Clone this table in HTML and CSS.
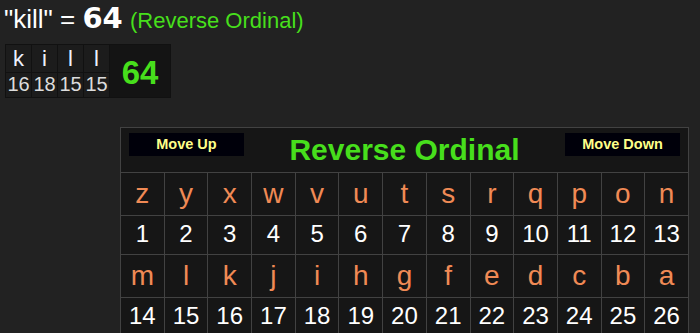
FILE: index.html
```html
<!DOCTYPE html>
<html lang="en">
<head>
<meta charset="utf-8">
<title>kill = 64 (Reverse Ordinal)</title>
<link rel="stylesheet" href="styles.css">
</head>
<body>
<div class="headline"><span class="word">"kill" = </span><b class="total">64</b> <span class="cipher">(Reverse Ordinal)</span></div>

<table class="breakdown">
  <tr>
    <td class="ch">k</td><td class="ch">i</td><td class="ch">l</td><td class="ch">l</td>
    <td class="sum" rowspan="2">64</td>
  </tr>
  <tr>
    <td class="val">16</td><td class="val">18</td><td class="val">15</td><td class="val">15</td>
  </tr>
</table>

<table class="cipher-table">
  <tr>
    <th colspan="13">
      <div class="bar">
        <button class="move">Move Up</button>
        <div class="title">Reverse Ordinal</div>
        <button class="move">Move Down</button>
      </div>
    </th>
  </tr>
  <tr class="letters">
    <td>z</td><td>y</td><td>x</td><td>w</td><td>v</td><td>u</td><td>t</td><td>s</td><td>r</td><td>q</td><td>p</td><td>o</td><td>n</td>
  </tr>
  <tr class="numbers">
    <td>1</td><td>2</td><td>3</td><td>4</td><td>5</td><td>6</td><td>7</td><td>8</td><td>9</td><td>10</td><td>11</td><td>12</td><td>13</td>
  </tr>
  <tr class="letters">
    <td>m</td><td>l</td><td>k</td><td>j</td><td>i</td><td>h</td><td>g</td><td>f</td><td>e</td><td>d</td><td>c</td><td>b</td><td>a</td>
  </tr>
  <tr class="numbers">
    <td>14</td><td>15</td><td>16</td><td>17</td><td>18</td><td>19</td><td>20</td><td>21</td><td>22</td><td>23</td><td>24</td><td>25</td><td>26</td>
  </tr>
</table>
</body>
</html>
```
FILE: styles.css
```css
html, body {
  background: #222222;
}
body {
  margin: 0;
  padding: 2px 0 0 4px;
  font-family: "Liberation Sans", Arial, sans-serif;
  color: #ffffff;
}

.headline {
  font-size: 26px;
  line-height: 32px;
  white-space: nowrap;
}
.headline .total {
  font-family: "DejaVu Sans", Verdana, sans-serif;
  font-weight: bold;
  font-size: 29px;
}
.headline .cipher {
  font-size: 22px;
  color: #47df1c;
}

.breakdown {
  margin: 7px 0 0 1px;
  border-collapse: collapse;
  border: 1px solid #111111;
  background: #141414;
}
.breakdown td {
  border: 1px solid #111111;
  padding: 0;
  text-align: center;
}
.breakdown .ch {
  width: 25px;
  background: #1c1c1c;
  font-size: 22px;
  line-height: 25px;
  padding: 1px 0 1px;
  color: #eef2ff;
}
.breakdown .val {
  width: 25px;
  background: #1c1c1c;
  font-size: 20px;
  line-height: 22px;
  padding: 0 0 2px;
  color: #dddddd;
}
.breakdown .sum {
  width: 60px;
  background: #141414;
  font-size: 33px;
  font-weight: bold;
  color: #47df1c;
  padding-top: 3px;
}

.cipher-table {
  margin: 29px 0 0 116px;
  width: 569px;
  table-layout: fixed;
  border-collapse: separate;
  border-spacing: 0;
  border-left: 1px solid #424242;
  border-top: 1px solid #424242;
  background: #161616;
}
.cipher-table th,
.cipher-table td {
  border-right: 1px solid #424242;
  border-bottom: 1px solid #424242;
  padding: 0;
  text-align: center;
}
.bar {
  display: flex;
  align-items: flex-start;
  padding: 5px 8px;
}
.move {
  flex: none;
  width: 115px;
  height: 23px;
  padding: 0;
  border: none;
  background: #00000a;
  color: #ffff88;
  font-family: "Liberation Sans", Arial, sans-serif;
  font-weight: bold;
  font-size: 14.5px;
  line-height: 23px;
}
.title {
  flex: 1;
  text-align: center;
  font-size: 30px;
  line-height: 34px;
  font-weight: bold;
  color: #47df1c;
}
.letters td {
  font-size: 28px;
  line-height: 32px;
  padding: 5px 0;
  color: #f08a55;
}
.numbers td {
  font-size: 24px;
  line-height: 28px;
  padding: 4px 0 6px;
  color: #ffffff;
}
```
